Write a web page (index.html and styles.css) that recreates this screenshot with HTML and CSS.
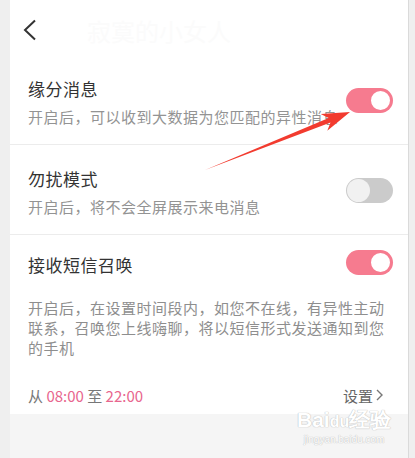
FILE: index.html
```html
<!DOCTYPE html>
<html>
<head>
	<meta charset="utf-8">
	<title>消息设置</title>
	<link rel="stylesheet" href="styles.css">
</head>
<body>
	<div class="phone">
		<div class="topbar">
			<svg class="back" width="14" height="22" viewBox="0 0 14 22">
				<polyline points="12,1.5 2,11 12,20.5" />
			</svg>
			<span class="ghost-title">寂寞的小女人</span>
		</div>

		<div class="item">
			<div class="item-text">
				<div class="item-title">缘分消息</div>
				<div class="item-desc">开启后，可以收到大数据为您匹配的异性消息</div>
			</div>
			<span class="switch on"></span>
		</div>

		<div class="item">
			<div class="item-text">
				<div class="item-title">勿扰模式</div>
				<div class="item-desc">开启后，将不会全屏展示来电消息</div>
			</div>
			<span class="switch"></span>
		</div>

		<div class="item item-sms">
			<div class="item-head">
				<div class="item-title">接收短信召唤</div>
				<span class="switch on"></span>
			</div>
			<p class="item-note">开启后，在设置时间段内，如您不在线，有异性主动联系，召唤您上线嗨聊，将以短信形式发送通知到您的手机</p>
			<div class="time-row">
				<span>从 <em>08:00</em> 至 <em>22:00</em></span>
				<span class="time-set">设置
					<svg width="7" height="12" viewBox="0 0 7 12"><polyline points="1,1 6,6 1,11" /></svg>
				</span>
			</div>
		</div>
	</div>

	<!-- annotation arrow drawn over the screenshot -->
	<svg class="arrow" width="415" height="458" viewBox="0 0 415 458">
		<polygon points="205,170 328.7,117.9 320.7,114 350,112 327.3,130.8 330.5,122.5" />
	</svg>

	<div class="watermark">
		<div class="wm-logo">Bai<span class="wm-du">du</span>经验</div>
		<div class="wm-url">jingyan.baidu.com</div>
	</div>
</body>
</html>
```

FILE: styles.css
```css
/* settings page screenshot */
body {
	margin: 0;
	width: 415px;
	height: 458px;
	overflow: hidden;
	background: #efefef;
	font-family: "Noto Sans CJK SC", "Noto Sans", sans-serif;
	position: relative;
}

.phone {
	margin-left: 10px;
	width: 398px;
	height: 458px;
	background: #f5f5f5;
	border-right: 1px solid #dadada;
}

.topbar {
	height: 55px;
	background: #fff;
	display: flex;
	align-items: flex-start;
	padding-left: 13px;
	padding-top: 19px;
	box-sizing: border-box;
}

.back polyline {
	fill: none;
	stroke: #333;
	stroke-width: 2;
}

.ghost-title {
	margin-left: 50px;
	margin-top: -6px;
	font-size: 24px;
	color: #fbfbfb;
}

.item {
	background: #fff;
	display: flex;
	align-items: center;
	justify-content: space-between;
	padding: 22px 15px 17px 18px;
	border-bottom: 1px solid #ececec;
}

.item-text {
	display: flex;
	flex-direction: column;
	gap: 6px;
	white-space: nowrap;
}

.item-title {
	font-size: 17px;
	letter-spacing: 0.5px;
	line-height: 24px;
	color: #333;
}

.item-desc {
	font-size: 15px;
	letter-spacing: 0.5px;
	line-height: 20px;
	color: #939393;
}

.switch {
	width: 47px;
	height: 25px;
	border-radius: 13px;
	background: #cbcbcb;
	display: flex;
	align-items: center;
	padding: 0 1px;
	box-sizing: border-box;
	margin-top: -4px;
}

.switch::after {
	content: "";
	width: 23px;
	height: 23px;
	border-radius: 50%;
	background: #f1f1f1;
	box-sizing: border-box;
}

.switch.on {
	background: #f67b8f;
	justify-content: flex-end;
}

.switch.on::after {
	background: #fff;
	border: 2px solid #f67b8f;
}

.item-sms {
	display: block;
	padding: 18px 15px 7px 18px;
	border-bottom: none;
}

.item-head {
	display: flex;
	align-items: center;
	justify-content: space-between;
}

.item-head .switch {
	margin-top: -6px;
}

.item-note {
	margin: 21px 0 0;
	font-size: 15px;
	letter-spacing: 0.5px;
	line-height: 20px;
	color: #8e8e8e;
}

.time-row {
	margin-top: 25px;
	height: 24px;
	display: flex;
	align-items: center;
	justify-content: space-between;
	padding-right: 10px;
	font-size: 15px;
	color: #777;
}

.time-row em {
	font-style: normal;
	color: #e8668e;
}

.time-set {
	display: flex;
	align-items: center;
	gap: 3px;
	color: #666;
}

.time-set polyline {
	fill: none;
	stroke: #777;
	stroke-width: 1.4;
}

.arrow {
	position: absolute;
	left: 0;
	top: 0;
	pointer-events: none;
}

.arrow polygon {
	fill: #f23b2f;
}

.watermark {
	position: absolute;
	left: 297px;
	top: 408px;
	text-align: center;
	color: #fff;
	text-shadow: 0 0 1px #bdbdbd, 0 0 1px #bdbdbd;
}

.wm-logo {
	font-family: "Liberation Sans", sans-serif;
	font-weight: bold;
	font-size: 21px;
	line-height: 24px;
}

.wm-du {
	font-size: 16px;
}

.wm-url {
	font-family: "Liberation Sans", sans-serif;
	font-size: 10px;
	line-height: 12px;
}
```
